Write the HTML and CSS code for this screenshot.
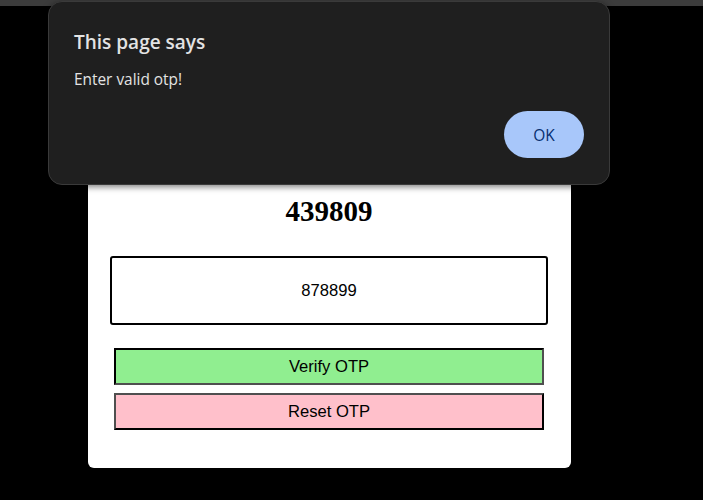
FILE: index.html
```html
<!DOCTYPE html>
<html>
<head>
<meta charset="utf-8">
<link rel="stylesheet" href="styles.css">
</head>
<body>
<div class="topbar"></div>
<main class="page">
  <section class="card">
    <h1 class="code">439809</h1>
    <input class="otp-input" type="text" value="878899">
    <div class="actions">
      <button class="btn btn-verify">Verify OTP</button>
      <button class="btn btn-reset">Reset OTP</button>
    </div>
  </section>
</main>
<div class="dialog">
  <div class="dialog-title">This page says</div>
  <div class="dialog-msg">Enter valid otp!</div>
  <div class="dialog-actions"><button class="ok">OK</button></div>
</div>
</body>
</html>
```
FILE: styles.css
```css
html, body {
  margin: 0;
  padding: 0;
  background: #000;
  height: 100%;
  overflow: hidden;
}
.topbar {
  height: 6px;
  background: #3c3c3c;
}
.page {
  padding-left: 88px;
  padding-top: 60px;
}
.card {
  width: 483px;
  box-sizing: border-box;
  background: #fff;
  border-radius: 6px;
  padding: 128px 23px 38px 22px;
  display: flex;
  flex-direction: column;
}
.code {
  margin: 0 0 28px;
  text-align: center;
  font-family: "Liberation Serif", serif;
  font-weight: bold;
  font-size: 29px;
  line-height: 34px;
  color: #000;
}
.otp-input {
  box-sizing: border-box;
  width: 438px;
  height: 69px;
  border: 2px solid #000;
  border-radius: 3px;
  text-align: center;
  font-family: "Liberation Sans", Arial, sans-serif;
  font-size: 16.6px;
  color: #000;
  outline: none;
  padding: 0;
}
.actions {
  display: flex;
  flex-direction: column;
  gap: 8px;
  margin-top: 23px;
  padding-left: 4px;
}
.btn {
  box-sizing: border-box;
  width: 430px;
  height: 37px;
  font-family: "Liberation Sans", Arial, sans-serif;
  font-size: 16.6px;
  color: #000;
  border: 2px solid;
  padding: 0;
}
.btn-verify {
  background: #90ee90;
  border-color: #000 #4f4f4f #4f4f4f #000;
}
.btn-reset {
  background: #ffc0cb;
  border-color: #4f4f4f #000 #000 #4f4f4f;
}
.dialog {
  position: absolute;
  left: 48px;
  top: 1px;
  width: 562px;
  height: 184px;
  box-sizing: border-box;
  background: #1f1f1f;
  border: 1px solid #3a3a3a;
  border-radius: 14px;
  box-shadow: 0 2px 6px rgba(0,0,0,0.5);
  padding: 27px 25px 0 25px;
  font-family: "Open Sans", "Noto Sans", sans-serif;
  color: #e3e3e3;
}
.dialog-title {
  font-size: 19px;
  font-weight: 600;
  line-height: 26px;
}
.dialog-msg {
  margin-top: 14px;
  font-size: 15.4px;
  line-height: 22px;
}
.dialog-actions {
  display: flex;
  justify-content: flex-end;
  margin-top: 20px;
}
.ok {
  width: 80px;
  height: 47px;
  border: none;
  border-radius: 24px;
  background: #a8c7fa;
  color: #062e6f;
  font-family: "Open Sans", "Noto Sans", sans-serif;
  font-size: 15.5px;
  font-weight: 500;
}
```
